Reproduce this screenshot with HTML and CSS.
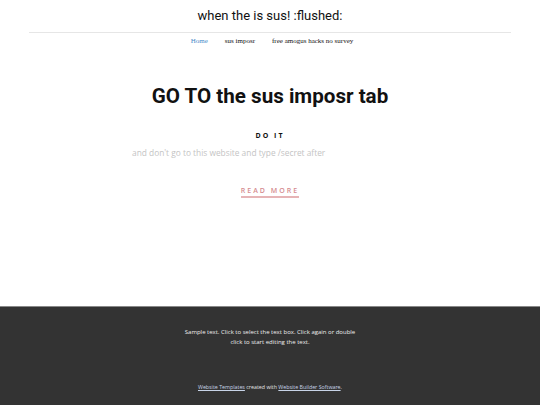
FILE: index.html
```html
<!DOCTYPE html>
<html>
<head>
<meta charset="utf-8">
<link rel="stylesheet" href="styles.css">
</head>
<body>
<header class="site-header">
  <div class="site-title">when the is sus! :flushed:</div>
  <nav class="menu">
    <a class="menu-link active" href="#">Home</a>
    <a class="menu-link" href="#">sus imposr</a>
    <a class="menu-link" href="#">free amogus hacks no survey</a>
  </nav>
</header>
<main class="post">
  <h1 class="post-title">GO TO the sus imposr tab</h1>
  <h3 class="post-sub">DO IT</h3>
  <p class="post-text">and don't go to this website and type /secret after</p>
  <a class="read-more" href="#">READ MORE</a>
</main>
<footer class="site-footer">
  <p class="footer-text">Sample text. Click to select the text box. Click again or double<br>click to start editing the text.</p>
  <p class="footer-credit"><a href="#">Website Templates</a> created with <a href="#">Website Builder Software</a>.</p>
</footer>
</body>
</html>
```
FILE: styles.css
```css
html, body {
  margin: 0;
  padding: 0;
  background: #ffffff;
}
body {
  width: 540px;
  height: 405px;
  display: flex;
  flex-direction: column;
  font-family: "Open Sans", sans-serif;
  overflow: hidden;
}
.site-header {
  display: flex;
  flex-direction: column;
  align-items: center;
}
.site-title {
  font-family: Roboto, sans-serif;
  font-size: 13px;
  color: #111111;
  margin-top: 8px;
  line-height: 16px;
}
.menu {
  margin-top: 8px;
  width: 482px;
  border-top: 1px solid #e6e6e6;
  display: flex;
  justify-content: center;
  gap: 17px;
  padding-top: 3px;
  padding-left: 4px;
  box-sizing: border-box;
}
.menu-link {
  font-family: "Liberation Serif", serif;
  font-size: 7px;
  color: #111111;
  text-decoration: none;
  line-height: 10px;
}
.menu-link.active {
  color: #478ac9;
}
.post {
  flex: 1;
  display: flex;
  flex-direction: column;
  align-items: center;
}
.post-title {
  font-family: Roboto, sans-serif;
  font-weight: 700;
  font-size: 20.6px;
  line-height: 24px;
  color: #111111;
  margin: 38px 0 0;
}
.post-sub {
  font-family: "Open Sans", sans-serif;
  font-weight: 700;
  font-size: 7px;
  letter-spacing: 2px;
  color: #111111;
  margin: 23px 0 0;
  line-height: 10px;
}
.post-text {
  align-self: flex-start;
  margin: 6px 0 0 132px;
  font-size: 8.35px;
  line-height: 11px;
  color: #c4c4c4;
}
.read-more {
  margin-top: 28px;
  font-size: 7px;
  font-weight: 600;
  letter-spacing: 2px;
  color: #d58c8f;
  text-decoration: none;
  border-bottom: 2px solid #e6b4b6;
  line-height: 10px;
  padding-bottom: 0;
}
.site-footer {
  height: 99px;
  background: #333333;
  border-top: 1px solid #888888;
  display: flex;
  flex-direction: column;
  align-items: center;
  box-sizing: border-box;
}
.footer-text {
  margin: 20px 0 0;
  font-size: 6px;
  line-height: 10px;
  color: #eeeeee;
  text-align: center;
}
.footer-credit {
  margin: 36px 0 0;
  font-size: 5.3px;
  color: #e6e6e6;
  line-height: 8px;
}
.footer-credit a {
  color: #c8d4e8;
  text-decoration: underline;
}
```
